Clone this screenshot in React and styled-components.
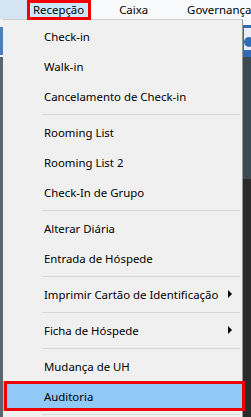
import styled, { createGlobalStyle } from "styled-components";

const GlobalStyle = createGlobalStyle`
	html, body {
		margin: 0;
		padding: 0;
		background: #f0f0f0;
	}
	body {
		font-family: "Noto Sans", "Segoe UI", sans-serif;
		font-size: 11.4px;
		color: #000;
	}
`;

const items = [
	{ label: "Check-in" },
	{ label: "Walk-in" },
	{ label: "Cancelamento de Check-in" },
	{ sep: true },
	{ label: "Rooming List" },
	{ label: "Rooming List 2" },
	{ label: "Check-In de Grupo" },
	{ sep: true },
	{ label: "Alterar Diária" },
	{ label: "Entrada de Hóspede" },
	{ sep: true },
	{ label: "Imprimir Cartão de Identificação", sub: true },
	{ sep: true },
	{ label: "Ficha de Hóspede", sub: true },
	{ sep: true },
	{ label: "Mudança de UH" },
	{ label: "Auditoria", active: true },
	{ sep: true },
];

export default function App() {
	return (
		<>
			<GlobalStyle />
			<Screen>
				<MenuBar>
					<BarItem $open $gap={22}>Recepção</BarItem>
					<BarItem $gap={27}>Caixa</BarItem>
					<BarItem>Governança</BarItem>
				</MenuBar>
				<Body>
					<LeftStrip />
					<Menu>
						{items.map((it, i) =>
							it.sep ? (
								<Separator key={i} />
							) : (
								<Item key={i} $active={it.active}>
									<span>{it.label}</span>
									{it.sub && <Arrow />}
								</Item>
							)
						)}
					</Menu>
					<RightStrip>
						<AppIcon>
							<svg width="8" height="32" viewBox="0 0 8 32">
								<rect x="0" y="0" width="8" height="32" fill="#2e6db4" />
								<rect x="1" y="3" width="7" height="22" fill="#e8eef5" />
								<circle cx="6" cy="17" r="5" fill="#2e6db4" />
							</svg>
						</AppIcon>
					</RightStrip>
				</Body>
			</Screen>
		</>
	);
}

const Screen = styled.div`
	width: 251px;
	height: 417px;
	overflow: hidden;
	display: flex;
	flex-direction: column;
	background: #f0f0f0;
`;

const MenuBar = styled.div`
	height: 19px;
	flex: none;
	display: flex;
	align-items: stretch;
	padding-left: 27px;
	background: linear-gradient(to right, #d5e4f3 0, #d5e4f3 27px, #f7f9fb 27px);
	white-space: nowrap;
	font-size: 11.4px;
`;

const BarItem = styled.div`
	position: relative;
	flex: none;
	display: flex;
	align-items: center;
	padding: 0 ${(p) => (p.$open ? "7px" : "6px")} 1px 6px;
	margin-right: ${(p) => (p.$gap || 0) + "px"};
	background: ${(p) => (p.$open ? "#cce8ff" : "transparent")};
	&::after {
		content: "";
		display: ${(p) => (p.$open ? "block" : "none")};
		position: absolute;
		inset: 0 0 -1px 0;
		border: 3px solid #f00000;
	}
`;

const Body = styled.div`
	flex: 1;
	display: flex;
	min-height: 0;
`;

const LeftStrip = styled.div`
	width: 3px;
	flex: none;
	background: linear-gradient(
		to bottom,
		#eef3f8 0,
		#eef3f8 8px,
		#4a7fb8 8px,
		#4a7fb8 36px,
		#eef3f8 36px,
		#eef3f8 38px,
		#5a656d 38px
	);
`;

const Menu = styled.div`
	width: 239px;
	flex: none;
	background: #f0f0f0;
	border-top: 1px solid #cfcfcf;
	border-right: 1px solid #979797;
	padding-top: 1px;
	display: flex;
	flex-direction: column;
`;

const Item = styled.div`
	position: relative;
	height: 30px;
	flex: none;
	display: flex;
	align-items: center;
	justify-content: space-between;
	padding: 0 10px 0 41px;
	background: ${(p) => (p.$active ? "#91c9f7" : "transparent")};
	white-space: nowrap;
	&::after {
		content: "";
		display: ${(p) => (p.$active ? "block" : "none")};
		position: absolute;
		top: 0;
		bottom: 0;
		left: 1px;
		right: -3px;
		border: 3px solid #f00000;
	}
`;

const Arrow = styled.span`
	width: 0;
	height: 0;
	border-top: 4px solid transparent;
	border-bottom: 4px solid transparent;
	border-left: 4px solid #000;
`;

const Separator = styled.div`
	height: 6px;
	flex: none;
	display: flex;
	align-items: center;
	padding: 0 2px 0 39px;
	&::before {
		content: "";
		flex: 1;
		height: 1px;
		background: #d7d7d7;
	}
`;

const RightStrip = styled.div`
	flex: 1;
	display: flex;
	flex-direction: column;
	background: linear-gradient(
		to bottom,
		#f4f6f8 0,
		#f4f6f8 38px,
		#3c4b52 38px,
		#3c4b52 160px,
		#2b2b2b 160px
	);
`;

const AppIcon = styled.div`
	margin-top: 6px;
	height: 32px;
	display: flex;
`;
